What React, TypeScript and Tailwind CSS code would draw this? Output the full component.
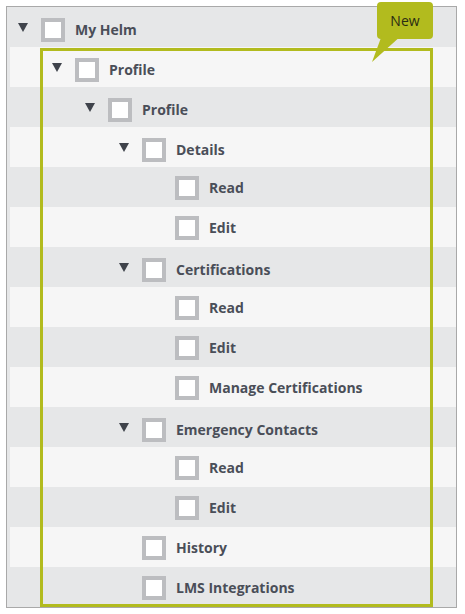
import { useState } from 'react';

type Node = {
    label: string;
    level: number;
    expandable?: boolean;
};

const nodes: Node[] = [
    { label: 'My Helm', level: 0, expandable: true },
    { label: 'Profile', level: 1, expandable: true },
    { label: 'Profile', level: 2, expandable: true },
    { label: 'Details', level: 3, expandable: true },
    { label: 'Read', level: 4 },
    { label: 'Edit', level: 4 },
    { label: 'Certifications', level: 3, expandable: true },
    { label: 'Read', level: 4 },
    { label: 'Edit', level: 4 },
    { label: 'Manage Certifications', level: 4 },
    { label: 'Emergency Contacts', level: 3, expandable: true },
    { label: 'Read', level: 4 },
    { label: 'Edit', level: 4 },
    { label: 'History', level: 3 },
    { label: 'LMS Integrations', level: 3 },
];

const indent = ['pl-[8px]', 'pl-[42px]', 'pl-[75px]', 'pl-[109px]', 'pl-[142px]'];

function Caret() {
    return (
        <svg width="10" height="9" viewBox="0 0 10 9" className="mb-[5px]">
            <polygon points="0,0 10,0 5,9" fill="#3f434b" />
        </svg>
    );
}

function Checkbox({ checked, onToggle }: { checked: boolean; onToggle: () => void }) {
    return (
        <button
            onClick={onToggle}
            className="w-[24px] h-[24px] shrink-0 border-4 border-[#bcbdc0] bg-white flex items-center justify-center"
        >
            {checked && <span className="w-[10px] h-[10px] bg-[#b2bb1e]" />}
        </button>
    );
}

export default function App() {
    const [checked, setChecked] = useState<Record<number, boolean>>({});

    return (
        <div
            className="relative pt-[6px] pl-[6px] min-h-screen bg-white"
            style={{ fontFamily: '"Open Sans", "Liberation Sans", sans-serif' }}
        >
            <div className="relative w-[451px] border border-[#a9a9a9] bg-[#e6e7e8]">
                {nodes.map((n, i) => (
                    <div
                        key={i}
                        className={`h-[40px] ml-[3px] flex items-center ${n.expandable ? 'pt-[5px]' : 'pt-[2px]'} ${indent[n.level]} ${i % 2 === 1 ? 'bg-[#f6f6f6]' : 'bg-[#e6e7e8]'}`}
                    >
                        <div className="w-[23px] shrink-0 flex">
                            {n.expandable && <Caret />}
                        </div>
                        <Checkbox
                            checked={!!checked[i]}
                            onToggle={() => setChecked({ ...checked, [i]: !checked[i] })}
                        />
                        <span className="ml-[10px] text-[14px] font-bold text-[#4a4e58] leading-none">
                            {n.label}
                        </span>
                    </div>
                ))}

                {/* highlight frame around the new Profile section */}
                <div className="absolute left-[33px] top-[41px] bottom-0 w-[393px] border-[3px] border-[#b2bb1e] pointer-events-none" />
            </div>

            <div className="absolute left-[377px] top-[2px] w-[56px] h-[37px] rounded-[4px] bg-[#b2bb1e] flex items-center justify-center">
                <span className="text-[14px] text-[#2a2c14]">New</span>
                <svg width="32" height="30" viewBox="0 0 32 30" className="absolute left-[-6px] top-[33px]">
                    <polygon points="11,0 31,0 1,27" fill="#b2bb1e" />
                </svg>
            </div>
        </div>
    );
}
